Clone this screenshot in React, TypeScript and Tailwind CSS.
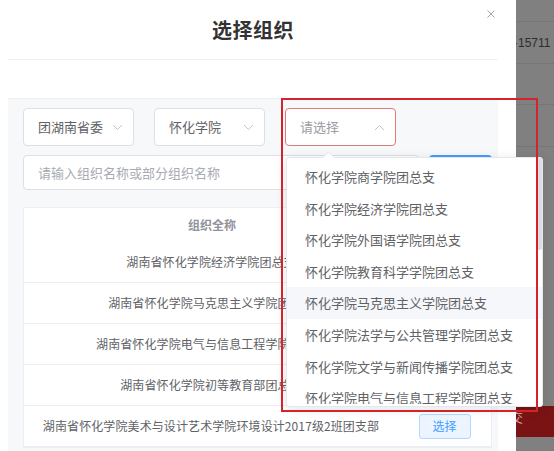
import React from "react";

const Chevron = ({ up = false }: { up?: boolean }) => (
  <svg width="11" height="7" viewBox="0 0 11 7" className="shrink-0">
    <polyline
      points={up ? "1,6 5.5,1.5 10,6" : "1,1 5.5,5.5 10,1"}
      fill="none"
      stroke="#c0c4cc"
      strokeWidth="1"
    />
  </svg>
);

const Select = ({ text, placeholder = false, active = false }: { text: string; placeholder?: boolean; active?: boolean }) => (
  <div
    className={`h-[38px] w-[111px] rounded-[4px] bg-white flex items-center justify-between pl-[14px] pr-[10px] text-[13px] border ${
      active ? "border-[#e07a7a]" : "border-[#dcdfe6]"
    } ${placeholder ? "text-[#9a9da3]" : "text-[#606266]"}`}
  >
    <span>{text}</span>
    <Chevron up={active} />
  </div>
);

const rows = [
  "湖南省怀化学院经济学院团总支",
  "湖南省怀化学院马克思主义学院团总支",
  "湖南省怀化学院电气与信息工程学院团总支",
  "湖南省怀化学院初等教育部团总支",
  "湖南省怀化学院美术与设计艺术学院环境设计2017级2班团支部",
];

const options = [
  "怀化学院商学院团总支",
  "怀化学院经济学院团总支",
  "怀化学院外国语学院团总支",
  "怀化学院教育科学学院团总支",
  "怀化学院马克思主义学院团总支",
  "怀化学院法学与公共管理学院团总支",
  "怀化学院文学与新闻传播学院团总支",
  "怀化学院电气与信息工程学院团总支",
];

export default function App() {
  return (
    <div
      className="w-[554px] h-[451px] relative overflow-hidden flex bg-[#808080]"
      style={{ fontFamily: '"Noto Sans CJK SC", "Noto Sans", sans-serif' }}
    >
      {/* modal */}
      <div className="w-[516px] h-full bg-white flex shrink-0">
        <div className="w-[490px] ml-[8px] flex flex-col">
          <div className="h-[60px] border-b border-[#f0f0f0] flex items-center justify-center relative shrink-0">
            <span className="text-[20px] font-bold text-[#333333] tracking-[0.5px]">选择组织</span>
            <svg className="absolute left-[479px] top-[10px]" width="8" height="8" viewBox="0 0 8 8">
              <path d="M0.5 0.5 L7.5 7.5 M7.5 0.5 L0.5 7.5" stroke="#a0a3a8" strokeWidth="1" />
            </svg>
          </div>
          <div className="h-[38px] shrink-0" />
          <div className="flex-1 bg-[#f7f8fa] border-t border-[#f0f1f3] pl-[15px] pr-[6px] pt-[9px] flex flex-col">
            <div className="flex gap-[20px]">
              <Select text="团湖南省委" />
              <Select text="怀化学院" />
              <Select text="请选择" placeholder active />
            </div>
            <div className="flex mt-[9px] h-[35px]">
              <div className="flex-1 border border-[#dcdfe6] rounded-[4px] bg-white flex items-center pl-[14px] text-[13px] text-[#a8abb2]">
                请输入组织名称或部分组织名称
              </div>
              <div className="w-[63px] ml-[10px] bg-[#409eff] rounded-[4px] text-white text-[13px] flex items-center justify-center">
                搜索
              </div>
            </div>
            <div className="mt-[17px] bg-white border border-[#ebeef5] flex flex-col">
              <div className="h-[34px] flex items-center text-[12px] font-bold text-[#909399]">
                <div className="w-[376px] text-center">组织全称</div>
                <div className="flex-1" />
              </div>
              {rows.map((r, i) => (
                <div key={i} className="h-[41px] flex items-center text-[12px] text-[#606266] border-b border-[#ebeef5]">
                  <div className="w-[374px] text-center whitespace-nowrap tracking-[0.1px]">{r}</div>
                  <div className="flex-1 flex justify-center">
                    <div className="w-[52px] h-[25px] rounded-[3px] bg-[#ecf5ff] border border-[#b3d8ff] text-[#409eff] text-[12px] flex items-center justify-center">
                      选择
                    </div>
                  </div>
                </div>
              ))}
            </div>
          </div>
        </div>
      </div>

      {/* background page behind overlay */}
      <div className="flex-1 flex flex-col text-[12px] text-[#2e2e2e] overflow-hidden" style={{ fontFamily: '"Liberation Sans", sans-serif' }}>
        <div className="h-[22px] border-b border-[#767676] shrink-0" />
        <div className="h-[42px] border-b border-[#767676] flex items-center shrink-0 whitespace-nowrap">
          <span className="ml-[-2px]">·15711</span>
        </div>
        <div className="h-[41px] border-b border-[#767676] shrink-0" />
        <div className="h-[42px] border-b border-[#767676] shrink-0" />
        <div className="h-[259px] shrink-0" />
        <div className="h-[31px] bg-[#7a1414] shrink-0 flex items-start pt-[1px] overflow-hidden">
          <span className="ml-[-6px] text-[13px] text-[#c9a0a0]" style={{ fontFamily: '"Noto Sans CJK SC", sans-serif' }}>交</span>
        </div>
        <div className="flex-1" />
      </div>

      {/* dropdown */}
      <div className="absolute left-[286px] top-[157px] w-[257px] h-[250px] bg-white border border-[#e4e7ed] rounded-[3px] shadow-[0_2px_12px_rgba(0,0,0,0.1)]">
        <div className="absolute left-[37px] top-[-5px] w-[9px] h-[9px] bg-white border-l border-t border-[#e4e7ed] rotate-45" />
        <div className="w-full h-[246px] overflow-hidden relative pt-[3px]">
          {options.map((o, i) => (
            <div
              key={i}
              className={`h-[31.6px] flex items-center pl-[18px] text-[13px] text-[#606266] whitespace-nowrap ${i === 4 ? "bg-[#f5f7fa]" : ""}`}
            >
              {o}
            </div>
          ))}
          <div className="absolute right-[0px] top-[0px] w-[5px] h-[92px] bg-[#dddee1] rounded-[3px]" />
        </div>
      </div>

      {/* red annotation */}
      <div className="absolute left-[281px] top-[98px] w-[257px] h-[314px] border-2 border-[#d4232c] pointer-events-none" />
    </div>
  );
}
